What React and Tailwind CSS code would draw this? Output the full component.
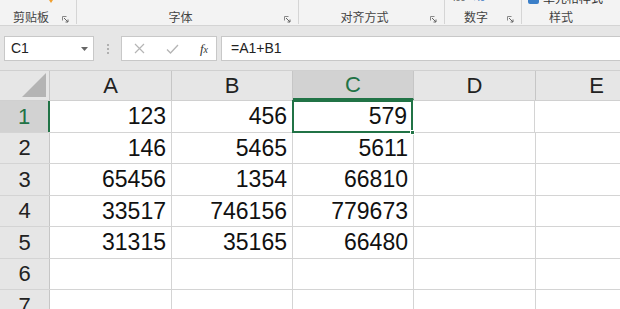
import React from 'react';

const cols = [
  { id: 'A', w: 'w-[122px]' },
  { id: 'B', w: 'w-[121px]' },
  { id: 'C', w: 'w-[121px]' },
  { id: 'D', w: 'w-[122px]' },
  { id: 'E', w: 'w-[122px]' },
];
const rows = [
  ['123', '456', '579'],
  ['146', '5465', '5611'],
  ['65456', '1354', '66810'],
  ['33517', '746156', '779673'],
  ['31315', '35165', '66480'],
  ['', '', ''],
  ['', '', ''],
];

const font = { fontFamily: '"Liberation Sans", "Noto Sans CJK SC", sans-serif' };
const cjk = { fontFamily: '"Noto Sans CJK SC", sans-serif' };

const Launcher = () => (
  <svg width="7" height="7" viewBox="0 0 7 7" className="mb-[1px]">
    <path d="M0.5 0.5h4M0.5 0.5v4" stroke="#888" fill="none" />
    <path d="M2 2l4 4M6 3.5v2.5h-2.5" stroke="#666" fill="none" />
  </svg>
);

const Group = ({ label, width, launcher = true }) => (
  <div className="flex items-end h-full border-r border-[#d5d5d5] shrink-0" style={{ width }}>
    <div className="flex-1 text-center text-[12px] text-[#444] leading-none pb-[1px]" style={cjk}>{label}</div>
    {launcher && <div className="w-[14px] flex justify-start"><Launcher /></div>}
  </div>
);

export default function App() {
  return (
    <div className="w-[620px] h-[309px] overflow-hidden bg-white" style={font}>
      {/* Ribbon bottom */}
      <div className="relative h-[26px] bg-[#f3f3f3] border-b border-[#d4d4d4] overflow-hidden">
        <div className="flex h-[24px]">
          <Group label="剪贴板" width={77} />
          <Group label="字体" width={222} />
          <Group label="对齐方式" width={146} />
          <Group label="数字" width={77} />
          <div className="flex-1 flex items-end justify-center pb-[1px] pr-[20px]">
            <span className="text-[12px] text-[#444] leading-none" style={cjk}>样式</span>
          </div>
        </div>
        {/* cut-off icons from the upper ribbon */}
        <div className="absolute left-[47px] top-[-3px] w-0 h-0 border-l-[4px] border-r-[4px] border-t-[6px] border-l-transparent border-r-transparent border-t-[#f0a030]" />
        <div className="absolute left-[453px] top-[-6px] text-[9px] text-[#555] leading-none flex gap-[3px]">
          <span>.00</span><span className="text-[#2a6ebb]">→.0</span>
        </div>
        <div className="absolute left-[528px] top-[-8px] flex items-center gap-[4px]">
          <div className="w-[11px] h-[11px] bg-[#3b7fc8] rounded-[2px]" />
          <span className="text-[12px] text-[#333] leading-none" style={cjk}>单元格样式</span>
        </div>
      </div>

      {/* Formula bar */}
      <div className="h-[44px] bg-[#e6e6e6] flex items-start pt-[10px]">
        <div className="ml-[4px] w-[90px] h-[25px] bg-white border border-[#c8c8c8] flex items-center justify-between pl-[6px] pr-[5px]">
          <span className="text-[14px] text-[#222]">C1</span>
          <svg width="7" height="4" viewBox="0 0 7 4"><path d="M0 0h7L3.5 4z" fill="#666" /></svg>
        </div>
        <div className="w-[27px] h-[25px] flex flex-col items-center justify-center gap-[2px]">
          <div className="w-[2px] h-[2px] bg-[#b0b0b0]" />
          <div className="w-[2px] h-[2px] bg-[#b0b0b0]" />
          <div className="w-[2px] h-[2px] bg-[#b0b0b0]" />
        </div>
        <div className="w-[96px] h-[25px] bg-white border border-[#c8c8c8] flex items-center pl-[12px] pr-[8px] justify-between">
          <svg width="11" height="11" viewBox="0 0 11 11"><path d="M1 1l9 9M10 1l-9 9" stroke="#b5b5b5" strokeWidth="1.2" /></svg>
          <svg width="13" height="10" viewBox="0 0 13 10"><path d="M1 5.5l3.5 3.5L12 1" stroke="#b5b5b5" strokeWidth="1.3" fill="none" /></svg>
          <span className="text-[13px] italic text-[#333] leading-none" style={{ fontFamily: '"Liberation Serif", serif' }}>f<span className="text-[10px]">x</span></span>
        </div>
        <div className="ml-[4px] flex-1 h-[25px] bg-white border border-[#c8c8c8] border-r-0 flex items-center pl-[9px]">
          <span className="text-[14px] text-[#222]">=A1+B1</span>
        </div>
      </div>

      {/* Grid */}
      <div className="flex flex-col">
        <div className="flex h-[31px] bg-[#e6e6e6] border-t border-[#d0d0d0] border-b border-[#c6c6c6]">
          <div className="w-[50px] shrink-0 border-r border-[#c6c6c6] relative">
            <svg className="absolute right-[3px] bottom-[3px]" width="24" height="24" viewBox="0 0 24 24"><path d="M24 0V24H0z" fill="#b4b4b4" /></svg>
          </div>
          {cols.map((c) => (
            <div
              key={c.id}
              className={
                c.id === 'C'
                  ? `${c.w} shrink-0 flex items-center justify-center bg-[#d2d2d2] text-[#217346] border-r border-[#c6c6c6] border-b-2 border-b-[#217346] text-[22px]`
                  : `${c.w} shrink-0 flex items-center justify-center text-[#222] border-r border-[#c6c6c6] text-[22px]`
              }
            >
              {c.id}
            </div>
          ))}
        </div>
        {rows.map((r, i) => (
          <div key={i} className="flex h-[31.5px] border-b border-[#d4d4d4]">
            <div
              className={
                i === 0
                  ? 'w-[50px] shrink-0 flex items-center justify-center bg-[#d2d2d2] text-[#217346] border-r-2 border-[#217346] text-[22px]'
                  : 'w-[50px] shrink-0 flex items-center justify-center bg-[#e6e6e6] text-[#222] border-r border-[#c6c6c6] text-[22px]'
              }
            >
              {i + 1}
            </div>
            {cols.map((c, j) => (
              <div
                key={c.id}
                className={
                  i === 0 && j === 2
                    ? `relative ${c.w} shrink-0 flex items-center justify-end pr-[4px] text-[23px] text-[#111] border-2 border-[#217346] -ml-px -mt-px h-[33px]`
                    : `${c.w} shrink-0 flex items-center justify-end pr-[5px] text-[23px] text-[#111] border-r border-[#d4d4d4]`
                }
              >
                {r[j] || ''}
                {i === 0 && j === 2 && (
                  <div className="absolute right-[-4px] bottom-[-4px] w-[5px] h-[5px] bg-[#217346] border border-white" />
                )}
              </div>
            ))}
          </div>
        ))}
      </div>
    </div>
  );
}
